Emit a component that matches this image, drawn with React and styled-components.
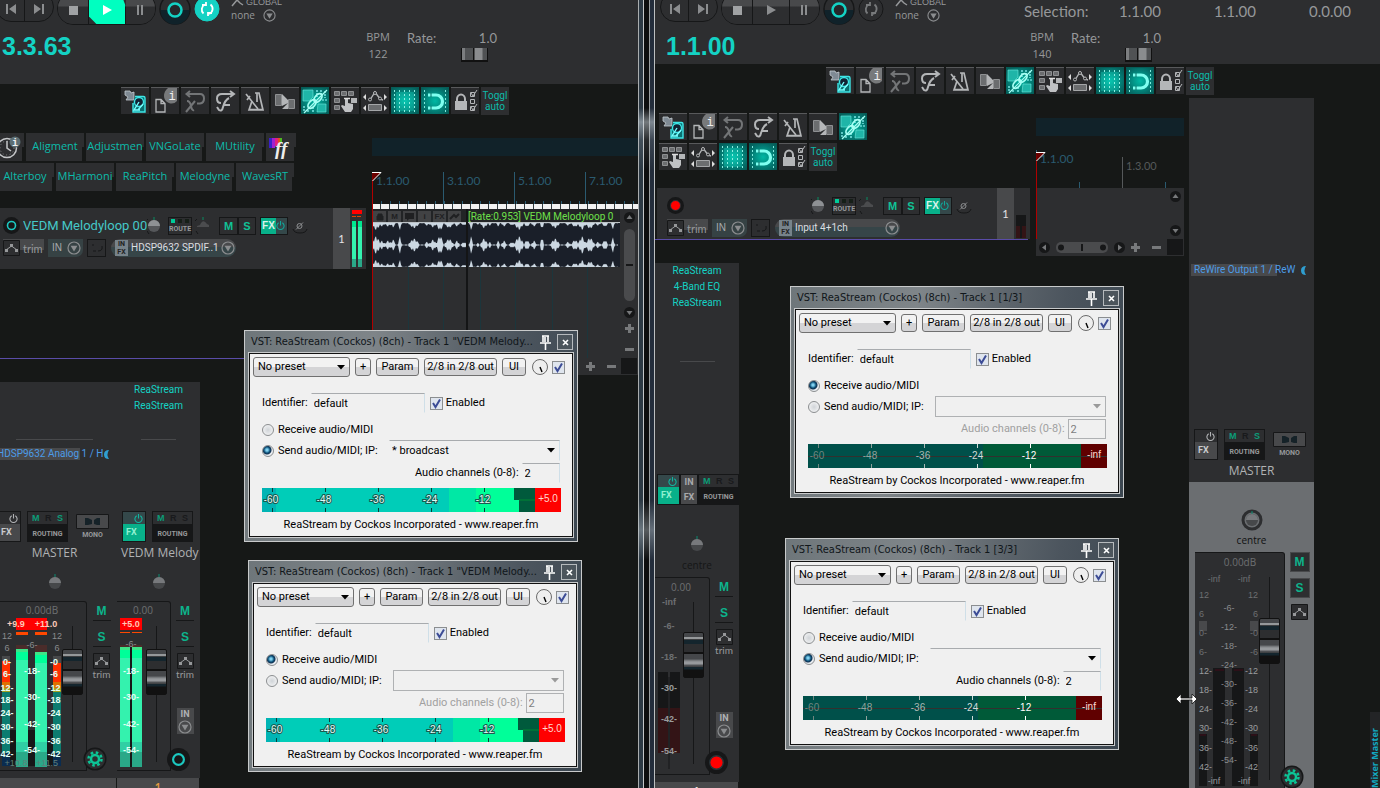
import React from 'react';
import styled, { createGlobalStyle, css } from 'styled-components';

const BG = '#161817';
const PANEL = '#2d2e30';
const RAISED = '#48494b';
const LINE = '#161718';
const TEAL = '#14d2c4';
const GREEN = '#0cb48c';
const DIM = '#6e7072';
const TEXT = '#96989a';

const ARIAL = '"Liberation Sans", Arial, sans-serif';
const UI = 'Lato, Calibri, sans-serif';
const SEGOE = '"Open Sans", "Segoe UI", sans-serif';
const DIALOG = 'Roboto, Tahoma, sans-serif';
const CAPTION = '"DejaVu Sans Condensed", "Segoe UI", sans-serif';

const GlobalStyle = createGlobalStyle`
  * {
    box-sizing: border-box;
  }
  body {
    margin: 0;
    background: ${BG};
    color: ${TEXT};
    font-family: ${UI};
    font-size: 12px;
    overflow: hidden;
  }
  button, input, select {
    font: inherit;
    color: inherit;
    margin: 0;
    padding: 0;
    border: 0;
    border-radius: 0;
    background: none;
    outline: none;
  }
  svg {
    display: block;
    flex: none;
  }
`;

/* ---------- page ---------- */

const Desktop = styled.div`
  position: relative;
  display: grid;
  grid-template-columns: 638fr 17px 725fr;
  height: 100vh;
  overflow: hidden;
`;

const Daw = styled.section`
  min-width: 0;
  display: flex;
  flex-direction: column;
  overflow: hidden;
`;

const Frames = styled.div`
  background:
    linear-gradient(transparent 108px, rgba(200, 210, 215, 0.55) 122px, rgba(200, 210, 215, 0.15) 140px, transparent 170px,
      transparent 500px, rgba(200, 210, 215, 0.4) 530px, transparent 560px),
    linear-gradient(90deg,
      #a9adaf 0 1px, #2c3944 1px 5px, #c3c6c8 5px 6px, #0d0e0f 6px 11px,
      #9a9ea0 11px 12px, #232d3b 12px 16px, #bcbfc0 16px 17px);
`;

/* ---------- transport ---------- */

const TransportBar = styled.header`
  display: flex;
  flex: none;
  height: ${p => p.$height}px;
  margin-left: ${p => p.$shift || 0}px;
  background: ${PANEL};
  font-family: ${UI};
`;

const TransportLeft = styled.div`
  flex: none;
  width: 369px;
`;

const TransportButtons = styled.div`
  display: flex;
  align-items: flex-start;
  height: 26px;
  padding-left: 5px;
`;

const Group = styled.div`
  display: flex;
  margin: -8px 3px 0 0;
  height: ${p => p.$h}px;
  border: 1px solid ${LINE};
  border-radius: 16px;
  overflow: hidden;
`;

const TransportButton = styled.button`
  display: flex;
  align-items: center;
  justify-content: center;
  width: ${p => p.$w}px;
  border-right: 1px solid ${LINE};
  padding-top: 3px;
  color: #8b8d8f;
  background: ${p => p.$raised ? 'linear-gradient(#48494b 13px, #2d2e30 14px)' : 'none'};
  &:last-child { border-right: 0; }
  ${p => p.$on && css`
    background: #00ffc0;
    color: #fff;
    clip-path: polygon(0 0, 86% 0, 100% 14px, 100% 100%, 20% 100%, 0 76%);
  `}
`;

const RoundButton = styled.button`
  width: 32px;
  height: 32px;
  margin-top: -7px;
`;

const Automation = styled.div`
  padding-left: 8px;
  width: 60px;
  font-size: 10px;
  line-height: 13px;
  color: ${TEXT};
  margin-top: -4px;
`;

const AutomationLine = styled.div`
  display: flex;
  align-items: center;
  gap: ${p => p.$gap}px;
  font-family: ${p => p.$caps ? ARIAL : SEGOE};
  font-size: ${p => p.$caps ? 9 : 10}px;
`;

const Clock = styled.output`
  display: block;
  margin: 5px 0 0 11px;
  font: bold 25px/30px ${ARIAL};
  color: ${TEAL};
`;

const TransportRight = styled.div`
  flex: 1;
  min-width: 0;
`;

const Selection = styled.div`
  display: flex;
  height: 28px;
  line-height: 22px;
  font-size: 15px;
  span { flex: none; width: 95px; white-space: nowrap; }
`;

const RateRow = styled.div`
  display: flex;
  line-height: 18px;
`;

const Tempo = styled.div`
  width: 36px;
  text-align: center;
  font-size: 11px;
  line-height: 17px;
  font-family: ${SEGOE};
`;

const Rate = styled.div`
  width: 90px;
  margin-left: 11px;
  font-size: 13px;
`;

const RateHead = styled.div`
  display: flex;
  justify-content: space-between;
  line-height: 20px;
`;

const RateSlider = styled.input`
  appearance: none;
  display: block;
  width: 27px;
  height: 14px;
  margin-left: 54px;
  &::-webkit-slider-thumb {
    appearance: none;
    width: 27px;
    height: 14px;
    border: solid #111;
    border-width: 0 1px 2px;
    background: linear-gradient(90deg, #7c7e80 0 3px, #505254 3px 11px, #111 11px 12px, #8a8c8e 13px 20px, #505254 21px);
  }
`;

const Skip = ({ flip }) => (
  <svg width="12" height="12" viewBox="0 0 12 12">
    <path d={flip ? 'M9 1h2v10H9zM1 1v10l7-5z' : 'M1 1h2v10H1zM11 1v10L4 6z'} fill="currentColor" />
  </svg>
);

const ArrowRing = ({ size = 13, color = '#8b8d8f' }) => (
  <svg width={size} height={size} viewBox="0 0 14 14">
    <circle cx="7" cy="7" r="6" fill="none" stroke={color} strokeWidth="1.200" />
    <path d="M3.600 4.800h6.800L7 10.600z" fill={color} />
  </svg>
);

const Transport = ({ height, shift, time, bpm, playing, selection }) => (
  <TransportBar $height={height} $shift={shift}>
    <TransportLeft>
      <TransportButtons>
        <Group $h={30}>
          <TransportButton $w={28} aria-label="Go to start"><Skip /></TransportButton>
          <TransportButton $w={28} aria-label="Go to end"><Skip flip /></TransportButton>
        </Group>
        <Group $h={33}>
          <TransportButton $w={31} $raised aria-label="Stop">
            <svg width="9" height="9"><path d="M0 0h9v9H0z" fill="#a0a2a4" /></svg>
          </TransportButton>
          <TransportButton $w={37} $raised $on={playing} aria-label="Play">
            <svg width="11" height="11"><path d="M1 0v10l9-5z" fill="currentColor" /></svg>
          </TransportButton>
          <TransportButton $w={29} $raised aria-label="Pause">
            <svg width="8" height="10"><path d="M0 0h2v10H0zM4 0h2v10H4z" fill="currentColor" /></svg>
          </TransportButton>
        </Group>
        <RoundButton aria-label="Record">
          <svg width="32" height="32">
            <circle cx="16" cy="16" r="15" fill="#2d2e30" stroke="#161718" strokeWidth="1.500" />
            <path d="M1.500 17h29a14.500 14.500 0 0 1-29 0z" fill="#10222a" />
            <circle cx="16" cy="17" r="6.500" fill="#25272a" stroke="#14d2c4" strokeWidth="2.500" />
          </svg>
        </RoundButton>
        <RoundButton aria-label="Repeat">
          <svg width="32" height="32">
            <circle cx="16" cy="16" r="12" fill={playing ? TEAL : 'none'} stroke={playing ? TEAL : '#161718'} />
            <g fill="none" stroke={playing ? '#fff' : '#77797b'} strokeWidth="1.800">
              <path d="M12.500 20.500A5.500 5.500 0 0 1 14 11.500M19.500 11.500A5.500 5.500 0 0 1 18 21" />
              <path d="M11 12h4v-3M21 20h-4v3" />
            </g>
          </svg>
        </RoundButton>
        <Automation>
          <AutomationLine $caps $gap={2}>
            <svg width="13" height="9"><path d="M1 8L6 2l3 3 3 2" fill="none" stroke="#96989a" strokeWidth="1.500" /></svg>
            GLOBAL
          </AutomationLine>
          <AutomationLine $gap={8}>none <ArrowRing /></AutomationLine>
        </Automation>
      </TransportButtons>
      <Clock>{time}</Clock>
    </TransportLeft>
    <TransportRight>
      <Selection>
        {selection && <><span>Selection:</span>{selection.map((s, i) => <span key={i}>{s}</span>)}</>}
      </Selection>
      <RateRow>
        <Tempo>BPM<br />{bpm}</Tempo>
        <Rate>
          <RateHead><label htmlFor={`rate${bpm}`}>Rate:</label><span>1.0</span></RateHead>
          <RateSlider id={`rate${bpm}`} type="range" defaultValue="50" />
        </Rate>
      </RateRow>
    </TransportRight>
  </TransportBar>
);

/* ---------- toolbars ---------- */

const ToolRow = styled.div`
  display: flex;
  flex: none;
  gap: 2px;
  height: 28px;
  margin-bottom: 2px;
  padding-left: ${p => p.$indent || 0}px;
`;

const Tool = styled.button`
  flex: none;
  width: 28px;
  height: 27px;
  background: ${p => p.$on ? 'radial-gradient(#00b8a4, #04706a 70%, #045853)' : '#2a2b2d'};
  border-top: 1px solid ${p => p.$on ? '#075c57' : '#58595b'};
`;

const TextTool = styled.button`
  flex: none;
  width: 28px;
  height: 28px;
  background: ${PANEL};
  color: #0cbcab;
  font: 10px/11px ${DIALOG};
`;

const icons = {
  project: (
    <>
      <path d="M4 3h5l1 2 3-1v8H5l2-3-3-2z" fill="#7f8a94" stroke="#c4cbd0" strokeWidth=".8" />
      <path d="M14 8.500h8.500q1.500 0 1.500 1.500v14H12v-9" fill="#0b6f70" stroke="#3ee6e6" strokeWidth="1.400" />
      <circle cx="18" cy="14" r="4.500" fill="#123" stroke="#3ee6e6" strokeWidth="1.300" />
      <path d="M18 14l-5 8h4l5-6M14 22h5" fill="none" stroke="#7ff" strokeWidth="1.400" />
    </>
  ),
  info: (
    <>
      <path d="M5 11.500h5l4 4V24H5zM10 11.500v4h4" fill="none" stroke="#b4b6b8" strokeWidth="1.300" />
      <path d="M26 0v13a7.500 7.500 0 0 1-13-5q0-5 4-8z" fill="#77797b" />
      <text x="17.500" y="11.500" fontSize="12" fontFamily="Liberation Mono" fill="#eee" textAnchor="start">i</text>
    </>
  ),
  undo: (
    <g fill="none" stroke="#737577" strokeWidth="2">
      <path d="M6 6h13q4 0 4 4.500T19 15.500h-3M9 3L5.500 6 9 9" />
      <path d="M6 13q3 0 4 5t3 4M14 13L5 24" />
    </g>
  ),
  redo: (
    <g fill="none" stroke="#b4b6b8" strokeWidth="2">
      <path d="M22 6H11q-5 0-5 4.500T10 15M19 3l4 3-4 3" />
      <path d="M18 10q-4 2-6 9-1 5-4 3l-2-3M13 17h6" />
    </g>
  ),
  metronome: (
    <g fill="none" stroke="#b4b6b8" strokeWidth="1.700">
      <path d="M14 5h4l4 17H8l3-9M8 21.500h14" />
      <path d="M5 6l12 15M9 8l-3 4M16 5v9" />
    </g>
  ),
  crossfade: (
    <>
      <path d="M4.500 6.500h6v11h-6zM17.500 11.500h6v9h-6z" fill="#6b6d6f" stroke="#8e9092" />
      <path d="M11 6l6 6v3l-6 3zM11 21l6-6v6z" fill="#b4b6b8" />
    </>
  ),
  ripple: (
    <>
      <path d="M2 2h10v7l-4 4H2zM17 16h8v8h-9z" fill="#1fb5a8" stroke="#6fe8dc" strokeWidth=".6" />
      <path d="M16 2v7M20 2v4M24 3v7M3 18v6M7 22v3M12 19v6M26 12h-5" stroke="#9ff" strokeWidth="1.200" strokeDasharray="2 1" />
      <g fill="none" stroke="#a6fff4">
        <ellipse cx="17" cy="10" rx="5" ry="3" transform="rotate(-48 17 10)" strokeWidth="1.800" />
        <ellipse cx="11" cy="16" rx="5" ry="3" transform="rotate(-48 11 16)" strokeWidth="1.800" />
        <path d="M3 25L26 2" strokeWidth="1.200" />
      </g>
    </>
  ),
  grouping: (
    <>
      <path d="M3.500 3.500h5v4h-5zM10.500 3.500h5v4h-5zM17.500 3.500h5v4h-5zM3.500 10.500h5v4h-5zM3.500 17.500h5v4h-5z" fill="#6b6d6f" stroke="#8e9092" />
      <path d="M20 10h6v5h-6z" fill="#b4b6b8" />
      <path d="M14 24l-4-6 1-1 3 1v-7q1.500-2 3 0v4l5 1v5l-2 3z" fill="#c0c2c4" />
      <path d="M13 10.500h6" stroke="#ddd" strokeWidth="1.500" />
    </>
  ),
  envelope: (
    <>
      <path d="M9 12l5-8 5 7 3 1" fill="none" stroke="#b4b6b8" strokeWidth="1.400" />
      <path d="M5 6v6L2 9zM23 6v6l3-3zM5 17v6l-3-3zM23 17v6l3-3z" fill="#ddd" />
      <g fill="#2a2b2d" stroke="#b4b6b8"><circle cx="9" cy="11.500" r="1.500" /><circle cx="14" cy="5" r="1.500" /><circle cx="19" cy="10.500" r="1.500" /></g>
      <path d="M7.500 16.500h13v6h-13z" fill="#6b6d6f" stroke="#a4a6a8" />
    </>
  ),
  grid: (
    <>
      <rect x="5" y="4" width="18" height="19" fill="#1ff0d8" opacity=".25" />
      <path d="M3.500 2v23M8.500 2v23M13.500 2v23M18.500 2v23M23.500 2v23" stroke="#8cefe2" strokeDasharray="2 2" />
    </>
  ),
  snap: (
    <>
      <path d="M3.500 2v23M24.500 2v23" stroke="#7fe8dc" strokeDasharray="2 2" />
      <path d="M7 7h8a6.500 6.500 0 0 1 0 13H7" fill="none" stroke="#7ffff0" strokeWidth="3.200" />
      <path d="M10 5v4M10 18v4" stroke="#056b64" />
    </>
  ),
  lock: (
    <>
      <path d="M6 14v-3a4 4.500 0 0 1 8 0v3" fill="none" stroke="#b4b6b8" strokeWidth="2" />
      <path d="M4 13h12v9H4z" fill="#b4b6b8" />
      <g fill="none" stroke="#b4b6b8"><path d="M19.500 4.500h4v4h-4zM19.500 11.500h4v4h-4zM19.500 18.500h4v4h-4zM20 5l2 3 4-6M20 19l2 3 4-6" /></g>
    </>
  ),
};

const teal = ['ripple', 'grid', 'snap'];

const ToolButton = ({ name }) => (
  <Tool $on={teal.includes(name)} aria-label={name}>
    <svg width="28" height="26" viewBox="0 0 28 26">{icons[name]}</svg>
  </Tool>
);

const Toggle = () => <TextTool>Toggl<br />auto</TextTool>;

const FIRST = ['project', 'info', 'undo', 'redo', 'metronome', 'crossfade', 'ripple'];
const SECOND = ['grouping', 'envelope', 'grid', 'snap', 'lock'];

const MainToolbar = styled.div`
  padding-top: 3px;
  height: ${p => p.$h}px;
  flex: none;
`;

const Shelf = styled.div`
  display: flex;
  gap: 2px;
  margin: 0 0 2px ${p => p.$shift}px;
`;

const PluginButton = styled.button`
  flex: none;
  width: ${p => p.$w || 58}px;
  height: 28px;
  padding-bottom: 2px;
  overflow: hidden;
  white-space: nowrap;
  background: linear-gradient(${PANEL}, ${PANEL}) 0 0 / calc(100% - 2px) 100% no-repeat, linear-gradient(${PANEL}, ${PANEL}) 0 0 / 100% 50% no-repeat;
  color: #0cbcab;
  font: 11px/20px ${SEGOE};
`;

/* ---------- track control panel ---------- */

const TrackRow = styled.div`
  display: flex;
  height: ${p => p.$h}px;
  margin: 0 6px 0 ${p => p.$inset || 0}px;
  background: ${PANEL};
`;

const TrackControls = styled.div`
  flex: none;
  width: ${p => p.$w}px;
  padding-left: ${p => p.$pad}px;
`;

const ControlLine = styled.div`
  display: flex;
  align-items: center;
  height: ${p => p.$h}px;
  padding-top: ${p => p.$pt || 0}px;
`;

const TrackName = styled.input`
  width: 124px;
  margin-left: 3px;
  height: 20px;
  font: 13px/20px ${DIALOG};
  color: #45c8c8;
`;

const Boxed = styled.button`
  display: flex;
  align-items: center;
  justify-content: center;
  flex: none;
  width: ${p => p.$w}px;
  height: 18px;
  margin-left: ${p => p.$ml || 0}px;
  border: 1px solid ${LINE};
  background: #2d2e30;
  color: #10c296;
  font: bold 11px/14px ${ARIAL};
`;

const RouteButton = styled(Boxed)`
  flex-direction: column;
  font: bold 7px/8px Roboto, sans-serif;
  color: ${TEXT};
`;

const FxPower = styled.span`
  display: flex;
  border: 1px solid ${LINE};
  margin-left: 4px;
  button { width: 15px; height: 16px; background: #08b18a; color: #d8f4ec; font: bold 10px/16px ${ARIAL}; }
  button + button { width: 11px; background: #34484a; }
`;

const EnvTag = styled.button`
  display: flex;
  align-items: center;
  gap: 3px;
  width: 41px;
  height: 18px;
  background: linear-gradient(#48494b 11px, transparent 11px);
  color: ${TEXT};
  font-size: 11px;
`;

const InputTag = styled.button`
  display: flex;
  align-items: center;
  gap: 5px;
  width: 35px;
  height: 18px;
  margin-left: 4px;
  padding-left: 4px;
  border-radius: 0 0 7px 0;
  background: #364244;
  color: #a8aaac;
  font: 10px/18px ${ARIAL};
`;

const InputPill = styled.label`
  display: flex;
  align-items: center;
  width: 125px;
  height: 18px;
  margin-left: 5px;
  padding: 0 1px 0 4px;
  border-radius: 9px;
  background: linear-gradient(#48494b 8px, #364548 8px);
  color: #dcdee0;
`;

const PillSelect = styled.select`
  appearance: none;
  flex: 1;
  min-width: 0;
  margin-left: 3px;
  font: 10px/16px ${DIALOG};
`;

const FxIn = styled.span`
  width: 13px;
  height: 16px;
  background: #77838a;
  color: #222;
  text-align: center;
  font: bold 7px/8px Roboto, sans-serif;
`;

const TrackNumber = styled.div`
  display: flex;
  align-items: center;
  justify-content: center;
  width: 17px;
  background: ${RAISED};
  color: #e6e6e6;
  font-size: 11px;
`;

const Power = ({ color = TEAL, size = 9 }) => (
  <svg width={size} height={size} viewBox="0 0 10 10">
    <path d="M3 2a4 4 0 1 0 4 0M5 0v5" fill="none" stroke={color} strokeWidth="1.200" />
  </svg>
);

const EnvIcon = () => (
  <svg width="17" height="16">
    <path d="M.5.5h16v15H.5z" fill="#2d2e30" stroke="#161718" />
    <path d="M3 10l5.500-4L14 10" fill="none" stroke="#96989a" />
    <path d="M2 9h3v3H2zM7 4h3v3H7zM12 9h3v3h-3z" fill="#96989a" />
  </svg>
);

const Knob = ({ small }) => (
  <svg width={small ? 22 : 16} height="18" viewBox={small ? '0 0 22 18' : '4 0 16 18'}>
    <path d="M3 4L5 2M4 14l2 3" stroke="#161718" />
    <path d="M11 0v3" stroke="#0a8a60" />
    {small
      ? <path d="M5 9l3-1q3-7 7-1l2 1v2H5z" fill="#4b4c4e" />
      : <><circle cx="11" cy="9" r="6" fill="#55575a" /><path d="M5 9a6 6 0 0 1 12 0z" fill="#8e9194" /></>}
  </svg>
);

const RecordDot = ({ armed, size = 17 }) => (
  <svg width={size} height={size} viewBox="0 0 17 17">
    <circle cx="8.500" cy="8.500" r="8.500" fill="#161718" />
    {armed
      ? <circle cx="8.500" cy="8.500" r="5" fill="#ff0000" stroke="#25353a" />
      : <circle cx="8.500" cy="8.500" r="4" fill="none" stroke="#1cc8c0" strokeWidth="1.600" />}
  </svg>
);

const TrackPanel = ({ height, inset, pad, controls, name, input, armed, children }) => (
  <TrackRow $h={height} $inset={inset}>
    <TrackControls $w={controls} $pad={pad}>
      <ControlLine $h={28} $pt={7}>
        <button aria-label="Arm track"><RecordDot armed={armed} /></button>
        <TrackName aria-label="Track name" defaultValue={name} />
        <Knob />
        <RouteButton $w={24} $ml={5}>
          <svg width="20" height="7"><path d="M1 1h4v4H1z" fill="#0c9" /><path d="M8 1h4v4H8zM15 1h4v4h-4z" fill="#161f18" /></svg>
          ROUTE
        </RouteButton>
        <Knob small />
        <Boxed $w={19} $ml={5}>M</Boxed>
        <Boxed $w={18}>S</Boxed>
        <FxPower><button>FX</button><button aria-label="FX bypass"><Power color="#11a59a" /></button></FxPower>
        <svg width="24" height="18">
          <path d="M5 12q1 4 7 4t7-4" fill="none" stroke="#161718" />
          <circle cx="11.500" cy="9" r="2.500" fill="none" stroke="#8b8d8f" /><path d="M8 12.500l7-7" stroke="#8b8d8f" />
        </svg>
      </ControlLine>
      <ControlLine $h={24}>
        <EnvTag><EnvIcon />trim</EnvTag>
        <InputTag>IN <ArrowRing size={14} /></InputTag>
        <Boxed $w={19} $ml={4} aria-label="Record mode">
          <svg width="13" height="12"><path d="M3 2v2M3 9h3M8 9q5 0 4-5" fill="none" stroke="#161718" /></svg>
        </Boxed>
        <InputPill>
          <FxIn>IN<br />FX</FxIn>
          <PillSelect aria-label="Track input"><option>{input}</option></PillSelect>
          <ArrowRing size={14} />
        </InputPill>
      </ControlLine>
    </TrackControls>
    <TrackNumber>1</TrackNumber>
    {children}
  </TrackRow>
);

/* ---------- timeline ---------- */

const Timeline = styled.div`
  flex: 1;
  min-width: 0;
  position: relative;
`;

const Overview = styled.div`
  height: 18px;
  margin-top: ${p => p.$mt}px;
  background: #112229;
`;

const Ruler = styled.div`
  display: flex;
  height: ${p => p.$h}px;
  margin-top: ${p => p.$mt}px;
  overflow: hidden;
  background: repeating-linear-gradient(90deg, #2a5a70 0 1px, transparent 1px ${p => p.$step}px) 0 100% / 100% ${p => p.$tick}px no-repeat;
`;

const Mark = styled.div`
  flex: none;
  width: ${p => p.$w}px;
  height: 100%;
  padding-left: 3px;
  margin-top: ${p => p.$mt || 0}px;
  border-left: 1px solid ${p => p.$c || '#2a5a70'};
  color: ${p => p.$c || '#2a5a70'};
  font-size: ${p => p.$fs || 12}px;
  line-height: 17px;
`;

const Beats = styled.div`
  height: 5px;
  background: repeating-linear-gradient(90deg, #f2f2f2 0 8px, #303a3e 8px 9px);
`;

const Arrange = styled.div`
  display: flex;
  height: ${p => p.$h}px;
  background: ${PANEL};
`;

const Lane = styled.div`
  position: relative;
  flex: 1;
  min-width: 0;
  overflow: hidden;
`;

const GridLines = styled.div`
  height: 100%;
  background: repeating-linear-gradient(90deg, transparent 0 36px, #1c363c 36px 37px, transparent 37px 71px, #1c363c 71px 72px);
`;

const Item = styled.div`
  width: 248px;
  height: 58px;
  background: #1a1f29;
  overflow: hidden;
`;

const ItemHead = styled.div`
  display: flex;
  gap: 2px;
  height: 14px;
  padding: 2px 0 0 1px;
  background: #222426;
  border-bottom: 1px solid #bcc2c6;
  white-space: nowrap;
  color: #6fe04a;
  font: 10px/11px ${DIALOG};
`;

const ItemName = styled.span`
  padding-left: 5px;
`;

const ItemChip = styled.span`
  flex: none;
  width: 13px;
  height: 11px;
  background: #414244;
  color: #1f2022;
  text-align: center;
  font: bold 8px/11px ${ARIAL};
`;

const EditCursor = styled.div`
  position: absolute;
  left: 0;
  top: ${p => p.$top}px;
  bottom: 17px;
  width: 1px;
  background: #b00000;
`;

const PlayCursor = styled.div`
  position: absolute;
  left: 94px;
  top: 0;
  bottom: 0;
  width: 2px;
  background: #141516;
`;

const ScrollColumn = styled.div`
  display: flex;
  flex-direction: column;
  align-items: center;
  justify-content: ${p => p.$spread ? 'space-between' : 'flex-start'};
  gap: 6px;
  width: 17px;
  padding: 3px 0;
`;

const ZoomSigns = styled.div`
  display: flex;
  flex-direction: ${p => p.$down ? 'column' : 'row'};
  gap: 12px;
`;

const ScrollThumb = styled.div`
  display: flex;
  align-items: center;
  justify-content: center;
  width: 11px;
  height: 72px;
  border-radius: 6px;
  background: #4a4b4d;
  &::after {
    content: '';
    width: 7px;
    height: 2px;
    background: #161718;
  }
`;

const ScrollRow = styled.div`
  display: flex;
  align-items: center;
  justify-content: flex-end;
  gap: ${p => p.$gap}px;
  height: 17px;
  background: ${PANEL};
`;

const Corner = styled.div`
  width: 17px;
  height: 17px;
  background: #161718;
  border: solid ${PANEL};
  border-width: 0 1px 1px 0;
`;

const ScrollArrow = ({ d }) => (
  <svg width="11" height="11"><circle cx="5.500" cy="5.500" r="5.500" fill="#161718" /><path d={d} fill="#77797b" /></svg>
);

const Sign = ({ plus }) => (
  <svg width="9" height="9"><path d={plus ? 'M3 0h3v3h3v3H6v3H3V6H0V3h3z' : 'M0 3h9v3H0z'} fill="#77797b" /></svg>
);

const CursorFlag = () => (
  <svg width="10" height="10"><path d="M0 .5h9L.5 9z" fill="#6a0000" /><path d="M0 .5h9L.5 9" fill="none" stroke="#fff" /></svg>
);

const hits = [[4, 8, 5], [10, 4, 3], [16, 4, 4], [21, 5, 3], [28, 8, 2], [42, 6, 6], [55, 3, 3], [61, 5, 4], [68, 9, 4], [77, 6, 5], [85, 4, 3], [92, 3, 3], [99, 8, 2], [106, 2, 2], [112, 6, 4], [118, 3, 2], [126, 4, 2], [132, 4, 3], [140, 3, 3], [147, 8, 5], [155, 5, 3], [162, 4, 3], [170, 8, 2], [183, 6, 5], [196, 3, 3], [203, 5, 4], [210, 8, 4], [218, 7, 5], [226, 3, 3], [233, 5, 3], [241, 7, 2]];

const level = x => {
  let v = x % 4 ? 0.4 : 0;
  hits.forEach(([c, h, w]) => {
    const k = 1 - Math.abs(x - c) / w;
    if (k > 0) v = Math.max(v, h * k ** 0.7 * (x % 3 === 2 ? 0.6 : 1.1));
  });
  return v;
};

const lane = (y, up, down) => {
  const xs = Array.from({ length: 247 }, (_, i) => i);
  const top = xs.map(x => `${x} ${y - level(x) * up}`);
  const bottom = xs.map(x => `${x} ${y + level(x) * down}`).reverse();
  return `M${top.concat(bottom).join('L')}z`;
};

const Waveform = () => (
  <svg width="247" height="44">
    <path d={lane(0, 0, 0.8) + lane(22, 1, 1) + lane(44, 0.8, 0)} fill="#ccd8e2" />
  </svg>
);

/* ---------- mixer ---------- */

const Mixer = styled.div`
  display: flex;
  flex: none;
  width: ${p => p.$w}px;
  height: ${p => p.$h}px;
  background: ${PANEL};
  overflow: hidden;
`;

const Strip = styled.div`
  display: flex;
  flex-direction: column;
  flex: none;
  width: ${p => p.$w}px;
  margin-left: ${p => p.$shift || 0}px;
  > * { flex-shrink: 0; }
`;

const Slots = styled.div`
  height: ${p => p.$h}px;
  text-align: center;
  font: 10px/16px ${DIALOG};
  color: ${TEAL};
`;

const SlotRule = styled.hr`
  width: ${p => p.$w}px;
  margin: 0 auto;
  border: 0;
  border-top: 1px solid ${RAISED};
`;

const Sends = styled.div`
  height: ${p => p.$h}px;
  padding: 8px 0 0 2px;
`;

const Send = styled.div`
  display: flex;
  align-items: center;
  height: 12px;
  color: #4c9ce8;
  font: 10px/12px ${DIALOG};
  background: linear-gradient(${RAISED}, ${RAISED}) 0 0 / 86px 100% no-repeat;
  padding-left: 3px;
  white-space: nowrap;
  svg { margin: 0 8px 0 auto; }
`;

const StripHead = styled.div`
  display: flex;
  height: 31px;
  padding-left: ${p => p.$pad}px;
`;

const FxBlock = styled.button`
  display: flex;
  flex-direction: column;
  flex: none;
  width: ${p => p.$w || 24}px;
  height: 31px;
  border: 1px solid ${LINE};
  background: linear-gradient(${p => p.$on ? '#34484a 12px, #08b18a 12px' : '#2d2e30 12px, #48494b 12px'});
  color: ${p => p.$on ? '#8ff0d0' : '#c8cacc'};
  font: bold 9px/18px ${DIALOG};
  text-align: left;
  padding-left: 3px;
  svg { margin: 2px 2px 0 auto; }
`;

const InFx = styled.button`
  width: 18px;
  height: 31px;
  border: 1px solid ${LINE};
  background: ${RAISED};
  color: #a8aaac;
  font: bold 9px/15px ${DIALOG};
`;

const Routing = styled.button`
  flex: none;
  width: 41px;
  height: 31px;
  margin-left: ${p => p.$ml}px;
  border: 1px solid ${LINE};
  background: linear-gradient(#2d2e30 12px, #161718 12px);
  color: ${TEXT};
  font: bold 7px/18px ${DIALOG};
`;

const RoutingFlags = styled.span`
  display: flex;
  justify-content: space-between;
  padding: 0 4px;
  height: 13px;
  font: bold 9px/13px ${ARIAL};
  color: #0c9c78;
  i { font-style: normal; color: #191a1c; }
`;

const Mono = styled.button`
  width: 33px;
  margin: 2px 0 0 8px;
  color: ${TEXT};
  font: bold 7px/12px ${DIALOG};
`;

const StripName = styled.div`
  height: 22px;
  padding-left: ${p => p.$pad || 0}px;
  text-align: ${p => p.$pad ? 'left' : 'center'};
  white-space: nowrap;
  overflow: hidden;
  color: #b0b2b4;
  font: 12px/22px ${SEGOE};
`;

const Pan = styled.div`
  display: flex;
  flex-direction: column;
  align-items: center;
  height: ${p => p.$h}px;
  padding-top: ${p => p.$pt}px;
  color: ${p => p.$c};
  font: 10px/18px ${SEGOE};
`;

const FaderRow = styled.div`
  position: relative;
  display: flex;
  height: ${p => p.$h}px;
  padding-left: ${p => p.$pad || 0}px;
`;

const FaderBox = styled.div`
  display: flex;
  flex: none;
  width: ${p => p.$w}px;
  height: 100%;
  background: ${PANEL};
  border: solid ${LINE};
  border-width: 1px 1px 1px 0;
  border-radius: 0 3px 0 0;
`;

const Fader = styled.input`
  appearance: none;
  writing-mode: vertical-lr;
  direction: rtl;
  flex: none;
  width: 21px;
  height: ${p => p.$h}px;
  margin-top: ${p => p.$mt}px;
  background: linear-gradient(#161718, #161718) 50% 0 / 1px 100% no-repeat;
  &::-webkit-slider-thumb {
    appearance: none;
    width: 21px;
    height: 46px;
    border: 1px solid #111;
    border-radius: 2px;
    background: linear-gradient(#45474a 0 4px, #95989a 4px 6px, #3c3e40 6px 7px, #14252d 7px 11px, #2d2e30 11px 19px,
      #111 19px 21px, #45474a 21px 26px, #6a6d70 27px, #96999c 29px 31px, #55575a 32px, #3a3c3e 34px, #14252d 34px 36px, #111 37px);
  }
`;

const Side = styled.div`
  display: flex;
  flex-direction: column;
  align-items: center;
  width: ${p => p.$w || 28}px;
  color: ${TEXT};
  font: 10px/11px ${UI};
`;

const SideButton = styled.button`
  width: ${p => p.$boxed ? 20 : 18}px;
  height: 20px;
  margin-bottom: 6px;
  color: ${GREEN};
  font: bold 12px/18px ${ARIAL};
  ${p => p.$boxed ? css`
    background: ${PANEL};
    border: 1px solid #48494b;
  ` : css`
    border-bottom: 1px solid ${LINE};
  `}
`;

const InBadge = styled.button`
  width: 17px;
  height: 26px;
  margin-top: ${p => p.$mt}px;
  background: ${RAISED};
  color: #b0b2b4;
  font: bold 9px/11px ${DIALOG};
  svg { margin: 0 auto; }
`;

const CornerButton = styled.button`
  position: absolute;
  left: ${p => p.$left}px;
  top: ${p => p.$top}px;
`;

const StripFoot = styled.div`
  flex: 1;
  margin-top: 7px;
  border-right: 1px solid ${BG};
  background: ${RAISED};
  color: ${p => p.$c || '#e6e6e6'};
  text-align: center;
  font: bold 11px/17px ${UI};
`;

const PanKnob = ({ ring }) => (
  <svg width="22" height="22">
    {ring && <circle cx="11" cy="11" r="9" fill="#6b6e71" stroke="#2d2e30" strokeWidth="3" />}
    <circle cx="11" cy="11" r="6" fill="#46484a" />
    <path d="M5 11a6 6 0 0 1 12 0z" fill="#77797c" />
    <path d="M11 2v3" stroke="#0a8a70" />
  </svg>
);

const Gear = () => (
  <svg width="24" height="24">
    <circle cx="12" cy="12" r="11.500" fill="#161718" />
    <circle cx="12" cy="12" r="10" fill="#2d2e30" />
    <circle cx="12" cy="12" r="6.500" fill="none" stroke="#0cc496" strokeWidth="2.500" strokeDasharray="2.550 2.550" />
    <circle cx="12" cy="12" r="4" fill="none" stroke="#0cc496" strokeWidth="2.500" />
  </svg>
);

const Moon = () => <svg width="5" height="9"><path d="M5 0Q0 0 0 4.500T5 9Q2 4.500 5 0z" fill="#2f9ed0" /></svg>;

const SCALE = { fontFamily: 'Liberation Sans', fontSize: 9, textAnchor: 'middle' };

const Labels = ({ list, x, fill, weight }) => (
  <g fill={fill} fontWeight={weight}>
    {list.map(([t, y]) => <text key={t + y} x={x} y={y + 3}>{t}</text>)}
  </g>
);

const LitBar = ({ x, w, y }) => (
  <>
    <rect x={x} y={y} width={w} height={165 - y} fill="#34f2ae" />
    <rect x={x} y={y} width={w} height="3" fill="#3fe488" />
    <rect x={x} y={y + 3} width={w} height="8" fill="#00ff99" />
    <rect x={x} y="140" width={w} height="14" fill="#30cfa4" />
    <rect x={x} y="150" width={w} height="15" fill="#2aa888" />
  </>
);

const SideBar = ({ x, y }) => (
  <>
    <rect x={x} y="54" width="8" height="8" fill="#48494b" />
    <rect x={x} y={y} width="8" height={86 - y} fill="#ff3000" />
    <rect x={x} y="80" width="8" height="6" fill="#e07000" />
    <rect x={x} y="86" width="8" height="4" fill="#a0a020" />
    <rect x={x} y="90" width="8" height="61" fill="#0c7c70" />
    <rect x={x} y="151" width="8" height="13" fill="#0a2c50" />
  </>
);

const LIT_CENTER = [['-18-', 69], ['-30-', 95], ['-42-', 122], ['-54-', 148]];

const MasterLit = () => (
  <svg width="70" height="168" {...SCALE}>
    <text x="50" y="12" fill={DIM} fontFamily="Open Sans" fontSize="10">0.00dB</text>
    <rect x="24" y="16" width="31" height="12" fill="#ff0000" />
    <g fill="#ffc8b8" fontWeight="bold"><text x="24" y="25">+9.9</text><text x="54" y="25">+11.0</text></g>
    <path d="M24 31.500h12M43 31.500h12" stroke="#ff4800" strokeWidth="3" />
    <path d="M24 43h12v4H24zM43 43h12v7H43z" fill="#4a2c2a" />
    <path d="M18 128h6v36h-6zM36 128h7v36h-7zM55 128h6v36h-6z" fill="#161718" />
    <SideBar x={10} y={59} />
    <SideBar x={61} y={61} />
    <LitBar x={24} w={12} y={47} />
    <LitBar x={43} w={12} y={50} />
    <Labels x={15} fill="#8a8c8e" list={[['12', 34], ['6', 46]]} />
    <Labels x={65} fill="#8a8c8e" list={[['12', 34], ['6', 46]]} />
    <Labels x={40} fill="#8a8c8e" list={[['-6-', 43]]} />
    <Labels x={15} fill="#e4fff4" weight="bold" list={[['0-', 60], ['6-', 72], ['12-', 86], ['18-', 98], ['24-', 111], ['30-', 125], ['36-', 139], ['42-', 152]]} />
    <Labels x={62} fill="#e4fff4" weight="bold" list={[['-0', 60], ['-6', 72], ['-12', 86], ['-18', 98], ['-24', 111], ['-30', 125], ['-36', 139], ['-42', 152]]} />
    <Labels x={40} fill="#e4fff4" weight="bold" list={LIT_CENTER} />
    <g fill="#5f7f78"><text x="24" y="164">+10.8</text><text x="55" y="164">+11.5</text></g>
  </svg>
);

const MasterIdle = () => {
  const ys = [[12, 41], [6, 60], [0, 79], [6, 98], [12, 117], [18, 136], [24, 155], [30, 174], [36, 194], [42, 213]];
  return (
    <svg width="64" height="236" {...SCALE}>
      <text x="45" y="13" fill={DIM} fontFamily="Open Sans" fontSize="10">0.00dB</text>
      <path d="M4 68h8v10H4zM55 68h8v10h-8z" fill="#48494b" />
      <path d="M18 115h12v118H18zM37 115h12v118H37zM4 181h8v52H4zM55 181h8v52h-8z" fill="#161718" />
      <path d="M20 117h9M39 117h9M5 182h6M56 182h6" stroke="#2c1018" strokeWidth="2" />
      <g fill={DIM}><text x="19" y="29">-inf</text><text x="49" y="29">-inf</text></g>
      {ys.map(([n, y]) => (
        <g key={y} fill={y > 110 ? '#9a9c9e' : DIM}>
          <text x="4" y={y + 4} textAnchor="start">{n}{y > 70 && '-'}</text>
          <text x="63" y={y + 4} textAnchor="end">{y > 70 && '-'}{n}</text>
        </g>
      ))}
      <Labels x={34} fill="#8a8c8e" list={[6, 12, 18, 24, 30, 36, 42, 48, 54].map((n, i) => [`-${n}-`, 55 + i * 19])} />
      <g fill={TEXT}><text x="19" y="231">-inf</text><text x="49" y="231">-inf</text></g>
    </svg>
  );
};

const TrackLit = () => (
  <svg width="29" height="168" {...SCALE} overflow="visible">
    <text x="26" y="12" fill={DIM} fontFamily="Open Sans" fontSize="10">0.00</text>
    <rect x="3" y="16" width="22" height="12" fill="#ff0000" />
    <text x="14" y="25" fill="#ffc8b8" fontWeight="bold">+5.0</text>
    <path d="M3 30.500h10M15 30.500h10" stroke="#ff4800" />
    <path d="M3 43h22v2H3z" fill="#4a2c2a" />
    <path d="M3 45h22v120H3z" fill="#161718" />
    <LitBar x={3} w={10} y={45} />
    <LitBar x={15} w={10} y={45} />
    <Labels x={14} fill="#8a8c8e" list={[['-6-', 42]]} />
    <Labels x={14} fill="#e4fff4" weight="bold" list={LIT_CENTER} />
  </svg>
);

const TrackIdle = () => (
  <svg width="28" height="196" {...SCALE} overflow="visible">
    <text x="26" y="13" fill={DIM} fontFamily="Open Sans" fontSize="10">0.00</text>
    <path d="M3 94h10v81H3zM15 94h10v81H15z" fill="#161718" />
    <path d="M3 130h10v45H3zM15 130h10v45H15z" fill="#331416" />
    <path d="M14 99v92" stroke="#161718" />
    <Labels x={14} fill={DIM} weight="bold" list={[['-inf', 24], ['-6-', 48], ['-18-', 79]]} />
    <Labels x={14} fill="#9a9c9e" weight="bold" list={[['-30-', 110], ['-42-', 141], ['-54-', 173]]} />
  </svg>
);

const MonoButton = () => (
  <Mono>
    <svg width="33" height="15">
      <path d="M.5.5h32v14H.5z" fill="#48494b" stroke="#161718" />
      <path d="M9 4h3l4 2v4l-4 1H9zM24 4h-3l-3 2v4l3 1h3z" fill="#152228" />
    </svg>
    MONO
  </Mono>
);

const RoutingButton = ({ ml, stereo }) => (
  <Routing $ml={ml}>
    <RoutingFlags>M <i>R</i> {stereo ? <b>S</b> : <i>S</i>}</RoutingFlags>
    ROUTING
  </Routing>
);

const MasterHead = ({ send, space }) => (
  <>
    <Sends $h={space}><Send>{send}<Moon /></Send></Sends>
    <StripHead $pad={5}>
      <FxBlock><Power color="#b0b2b4" />FX</FxBlock>
      <RoutingButton ml={6} stereo />
      <MonoButton />
    </StripHead>
    <StripName>MASTER</StripName>
  </>
);

/* ---------- plug-in windows ---------- */

const check = encodeURIComponent('<svg xmlns="http://www.w3.org/2000/svg" width="13" height="13"><path d="M3 6l2.500 4L10 2.500" fill="none" stroke="#3c4c96" stroke-width="2"/></svg>');
const arrow = c => encodeURIComponent(`<svg xmlns="http://www.w3.org/2000/svg" width="8" height="5"><path d="M0 0h8L4 4.500z" fill="${c}"/></svg>`);

const Plugin = styled.section`
  position: absolute;
  left: ${p => p.$x}px;
  top: ${p => p.$y}px;
  width: 334px;
  padding: 0 4px 4px;
  border: 1px solid #c8cacb;
  background: linear-gradient(100deg, #6e767a, #7f8589 35%, #5c646b 60%, #4c555e 75%, #3b4650);
  color: #000;
  font: 11px/14px ${DIALOG};
`;

const TitleBar = styled.header`
  display: flex;
  align-items: center;
  height: 22px;
  padding-left: 2px;
  color: #10161a;
`;

const Title = styled.h2`
  flex: 1;
  width: 0;
  margin: 0;
  font: 11px/22px ${CAPTION};
  white-space: nowrap;
`;

const Close = styled.button`
  display: flex;
  align-items: center;
  justify-content: center;
  width: 16px;
  height: 16px;
  margin-left: 5px;
  border: 1px solid #b6babd;
  background: #4c555c;
`;

const Body = styled.div`
  height: 184px;
  padding: 3px 0 0 3px;
  border: 1px solid #111;
  outline: 1px solid #c8cacb;
  background: #f0f0f0;
`;

const Row = styled.div`
  display: flex;
  align-items: center;
  height: ${p => p.$h}px;
  margin-top: ${p => p.$mt || 0}px;
  padding-left: ${p => p.$pad || 0}px;
`;

const face = css`
  border: 1px solid #707070;
  border-radius: 3px;
  background: linear-gradient(#f2f2f2 50%, #d4d4d6 50%);
`;

const Preset = styled.select`
  appearance: none;
  ${face}
  width: 97px;
  height: 20px;
  padding-left: 4px;
  background: url("data:image/svg+xml,${arrow('#000')}") right 4px center no-repeat, linear-gradient(#f2f2f2 50%, #d4d4d6 50%);
`;

const FaceButton = styled.button`
  ${face}
  flex: none;
  width: ${p => p.$w}px;
  height: 18px;
  margin-left: 5px;
  line-height: 14px;
  white-space: nowrap;
`;

const Dial = styled.svg`
  margin-left: 6px;
`;

const Check = styled.input`
  appearance: none;
  width: 13px;
  height: 13px;
  margin: ${p => p.$m || 0};
  border: 1px solid #8b8e90;
  background: #dfe5ee url("data:image/svg+xml,${check}") -1px -1px no-repeat;
`;

const Radio = styled.input`
  appearance: none;
  width: 12px;
  height: 12px;
  margin-right: 4px;
  border: 1px solid #8b8e90;
  border-radius: 50%;
  background: radial-gradient(#d0d4d8, #fafafa);
  &:checked {
    background: radial-gradient(circle at 4px 4px, #7fd0f0 0 1px, #0c5078 3px, #123050 4px, #e8ecf0 5px);
  }
`;

const edge = css`
  border: 1px solid transparent;
  border-top-color: #a8abae;
  border-right-color: #cfdfe8;
  &:disabled {
    border-color: #afb1b3;
    color: #7e7e7e;
    opacity: 1;
  }
`;

const Field = styled.input`
  ${edge}
  width: ${p => p.$w}px;
  height: 20px;
  margin-left: 3px;
  padding-left: 2px;
`;

const Host = styled.select`
  appearance: none;
  ${edge}
  flex: none;
  width: 171px;
  height: 21px;
  padding-left: 2px;
  background: url("data:image/svg+xml,${p => arrow(p.disabled ? '#9a9a9a' : '#000')}") right 4px center no-repeat;
`;

const RadioLabel = styled.label`
  display: flex;
  align-items: center;
  width: ${p => p.$w || 200}px;
  white-space: nowrap;
`;

const ChannelLabel = styled.label`
  color: ${p => p.$off ? '#a0a0a0' : '#000'};
`;

const Credit = styled.footer`
  padding-right: 3px;
  text-align: center;
  line-height: 25px;
`;

const LevelMeter = ({ lit }) => (
  <svg width="299" height="24" fontFamily="Liberation Sans" fontSize="10" textAnchor="middle">
    {lit ? (
      <>
        <path d="M0 0h299v24H0z" fill="#00cdb8" />
        <path d="M0 0h14v24H0z" fill="#00b4b4" />
        <path d="M187 0h27v24h-27z" fill="#00e8a5" />
        <path d="M214 0h45v24h-45z" fill="#00ff99" />
        <path d="M252 0h21v24h-16V12h-5z" fill="#005a3c" />
        <path d="M257 12h16" stroke="#083" />
        <path d="M273 0h26v24h-26z" fill="#ff0000" />
      </>
    ) : (
      <>
        <path d="M0 0h175v24H0z" fill="#00504a" />
        <path d="M175 0h98v24h-98z" fill="#005a38" />
        <path d="M273 0h26v24h-26z" fill="#600000" />
        <path d="M0 12.500h299" stroke="#33302e" />
      </>
    )}
    {[60, 48, 36, 24, 12].map((n, i) => {
      const c = lit ? '#e0fff8' : ['#6f8680', '#8fa29c', '#a9b8b4', '#d0dcd8', '#fff'][i];
      return (
        <g key={n} fill={c}>
          <path d={`M${10 + i * 53}.5 0v4M${10 + i * 53}.5 20v4`} stroke={lit ? '#053f3a' : c} />
          <text x={9 + i * 53} y="15" stroke={lit ? '#1a5a50' : 'none'} strokeWidth="2" paintOrder="stroke">-{n}</text>
        </g>
      );
    })}
    <text x="286" y="14" fill="#ffd8d0">{lit ? '+5.0' : '-inf'}</text>
  </svg>
);

const ReaStream = ({ id, x, y, title, sending, host, lit }) => (
  <Plugin $x={x} $y={y}>
    <TitleBar>
      <Title>{title}</Title>
      <svg width="13" height="15"><path d="M3 1h7M4 1v6M9 1v6M6 2v5M1 8h11M6.500 8v7" fill="none" stroke="#fff" strokeWidth="1.600" /></svg>
      <Close aria-label="Close"><svg width="7" height="7"><path d="M1 1l5 5M6 1L1 6" stroke="#fff" strokeWidth="1.600" /></svg></Close>
    </TitleBar>
    <Body>
      <Row $h={20}>
        <Preset aria-label="Preset"><option>No preset</option></Preset>
        <FaceButton $w={16}>+</FaceButton>
        <FaceButton $w={43}>Param</FaceButton>
        <FaceButton $w={73}>2/8 in 2/8 out</FaceButton>
        <FaceButton $w={24}>UI</FaceButton>
        <Dial width="16" height="18">
          <circle cx="8" cy="9" r="7.500" fill="#eee" stroke="#6a6a6a" /><path d="M8 9l2 5" stroke="#000" strokeWidth="1.400" />
        </Dial>
        <Check type="checkbox" defaultChecked $m="0 0 0 4px" aria-label="Plug-in enabled" />
      </Row>
      <Row $h={20} $mt={16} $pad={9}>
        <label htmlFor={`${id}-name`}>Identifier:</label>
        <Field id={`${id}-name`} $w={114} defaultValue="default" />
        <Check id={`${id}-on`} type="checkbox" defaultChecked $m="0 3px 0 5px" />
        <label htmlFor={`${id}-on`}>Enabled</label>
      </Row>
      <Row $h={20} $mt={7} $pad={9}>
        <RadioLabel><Radio type="radio" name={id} defaultChecked={!sending} />Receive audio/MIDI</RadioLabel>
      </Row>
      <Row $h={21} $pad={9}>
        <RadioLabel $w={127}><Radio type="radio" name={id} defaultChecked={sending} />Send audio/MIDI; IP:</RadioLabel>
        <Host aria-label="IP" disabled={!sending}><option>{host}</option></Host>
      </Row>
      <Row $h={22} $mt={1} $pad={162}>
        <ChannelLabel htmlFor={`${id}-ch`} $off={!sending}>Audio channels (0-8):</ChannelLabel>
        <Field id={`${id}-ch`} $w={38} defaultValue="2" disabled={!sending} />
      </Row>
      <Row $h={24} $mt={4} $pad={9}><LevelMeter lit={lit} /></Row>
      <Credit>ReaStream by Cockos Incorporated - www.reaper.fm</Credit>
    </Body>
  </Plugin>
);

/* ---------- left session ---------- */

const Work = styled.div`
  display: flex;
  flex: none;
  height: 267px;
`;

const TrackColumn = styled.div`
  display: flex;
  flex-direction: column;
  flex: none;
  width: ${p => p.$w}px;
  padding-top: ${p => p.$pt}px;
`;

const Gap = styled.div`
  flex: none;
  height: ${p => p.$h}px;
`;

const PanelSplit = styled.div`
  flex: none;
  height: 1px;
  margin: ${p => p.$mt}px ${p => p.$mr || 0}px 0 0;
  background: #5a4ca8;
`;

const SendingSession = () => (
  <Daw>
    <Transport height={84} shift={-9} time="3.3.63" bpm="122" playing />
    <MainToolbar $h={31}>
      <ToolRow $indent={121}>
        {FIRST.concat(SECOND).map(n => <ToolButton key={n} name={n} />)}
        <Toggle />
      </ToolRow>
    </MainToolbar>
    <Work>
      <TrackColumn $w={372} $pt={18}>
        <Shelf $shift={-5}>
          <PluginButton $w={29} aria-label="Clock">
            <svg width="29" height="28">
              <circle cx="12" cy="15" r="9.500" fill="none" stroke="#c4c6c8" strokeWidth="1.500" />
              <circle cx="12" cy="15" r="7" fill="none" stroke="#8a8c8e" strokeDasharray="1 2.600" />
              <path d="M12 8v7l4 3" fill="none" stroke="#c4c6c8" strokeWidth="1.500" />
              <circle cx="20" cy="9" r="5.500" fill="#5c6e74" />
              <text x="17" y="12.500" fontSize="10" fontFamily="Liberation Mono" fontWeight="bold" fill="#eee">i</text>
            </svg>
          </PluginButton>
          {['Aligment', 'Adjustmen', 'VNGoLate', 'MUtility'].map(n => <PluginButton key={n}>{n}</PluginButton>)}
          <PluginButton $w={30} aria-label="Spectrum">
            <svg width="28" height="28">
              <path d="M3 5h3v10H3z" fill="#3a20c8" /><path d="M6 5h3v10H6z" fill="#a020d0" /><path d="M9 5h3v8H9z" fill="#e02080" />
              <path d="M12 5h2v6h-2z" fill="#e05020" /><path d="M14 5h2v5h-2z" fill="#50b820" />
              <text x="9" y="22" fontSize="19" fontFamily="Liberation Serif" fontStyle="italic" fontWeight="bold" fill="#eee">ff</text>
            </svg>
          </PluginButton>
        </Shelf>
        <Shelf $shift={-4}>
          {['Alterboy', 'MHarmoni', 'ReaPitch', 'Melodyne', 'WavesRT'].map(n => <PluginButton key={n}>{n}</PluginButton>)}
        </Shelf>
        <Gap $h={15} />
        <TrackPanel height={61} pad={3} controls={333} name="VEDM Melodyloop 00" input="HDSP9632 SPDIF..1">
          <svg width="14" height="61">
            <path d="M2 2h10v4H2z" fill="#ff0000" /><path d="M2 8.500h10" stroke="#e04000" strokeDasharray="4 1" />
            <path d="M2 13h4v46H2zM8 13h4v46H8z" fill="#34f2ae" />
            <path d="M2 13h4v6H2zM8 13h4v6H8z" fill="#00e890" />
            <path d="M2 51h4v8H2zM8 51h4v8H8z" fill="#2aa888" />
          </svg>
        </TrackPanel>
        <PanelSplit $mt={89} />
      </TrackColumn>
      <Timeline>
        <Overview $mt={23} />
        <Ruler $mt={16} $h={32} $step={9} $tick={3}>
          {['1.1.00', '3.1.00', '5.1.00', '7.1.00'].map(m => <Mark key={m} $w={71}>{m}</Mark>)}
        </Ruler>
        <Beats />
        <Arrange $h={149}>
          <Lane>
            <Item>
              <ItemHead>
                <ItemChip><svg width="13" height="11"><path d="M4 5h6v4H4zM5 5V3h4v2" fill="#1f2022" stroke="#1f2022" /></svg></ItemChip>
                <ItemChip>M</ItemChip>
                <ItemChip><svg width="13" height="11"><path d="M2 2h9v6H6l-2 2V8H2z" fill="#1f2022" /></svg></ItemChip>
                <ItemChip>i</ItemChip>
                <ItemChip>FX</ItemChip>
                <ItemChip><svg width="13" height="11"><path d="M2 8l4-4 2 2 3-3" fill="none" stroke="#1f2022" strokeWidth="2" /></svg></ItemChip>
                <ItemName>[Rate:0.953] VEDM Melodyloop 0</ItemName>
              </ItemHead>
              <Waveform />
            </Item>
            <GridLines />
            <PlayCursor />
          </Lane>
          <ScrollColumn>
            <ScrollArrow d="M5.500 3l3 4h-6z" />
            <ScrollThumb />
            <ScrollArrow d="M5.500 8l3-4h-6z" />
            <ZoomSigns $down><Sign plus /><Sign /></ZoomSigns>
          </ScrollColumn>
        </Arrange>
        <ScrollRow $gap={5}><ZoomSigns><Sign plus /><Sign /></ZoomSigns><Corner /></ScrollRow>
        <EditCursor $top={57}><CursorFlag /></EditCursor>
      </Timeline>
    </Work>
    <Mixer $w={200} $h={406}>
      <Strip $w={125} $shift={-8}>
        <Slots $h={57} />
        <SlotRule $w={77} />
        <MasterHead send="HDSP9632 Analog 1 / H" space={71} />
        <Pan $h={37} $pt={8}><PanKnob /></Pan>
        <FaderRow $h={170}>
          <FaderBox $w={95}>
            <MasterLit />
            <Fader type="range" aria-label="Master volume" defaultValue="74" $h={136} $mt={24} />
          </FaderBox>
          <Side $w={29}>
            <SideButton>M</SideButton>
            <SideButton>S</SideButton>
            <EnvIcon />trim
          </Side>
          <CornerButton $left={91} $top={146} aria-label="Master settings"><Gear /></CornerButton>
        </FaderRow>
        <StripFoot />
      </Strip>
      <Strip $w={83}>
        <Slots $h={57}>ReaStream<br />ReaStream</Slots>
        <SlotRule $w={35} />
        <Sends $h={71} />
        <StripHead $pad={5}>
          <FxBlock $on><Power color="#11b5a0" />FX</FxBlock>
          <RoutingButton ml={6} />
        </StripHead>
        <StripName $pad={4}>VEDM Melody</StripName>
        <Pan $h={37} $pt={8}><PanKnob /></Pan>
        <FaderRow $h={170}>
          <FaderBox $w={54}>
            <TrackLit />
            <Fader type="range" aria-label="Track 1 volume" defaultValue="74" $h={136} $mt={24} />
          </FaderBox>
          <Side>
            <SideButton>M</SideButton>
            <SideButton>S</SideButton>
            <EnvIcon />trim
            <InBadge $mt={28}>IN<ArrowRing size={14} /></InBadge>
          </Side>
          <CornerButton $left={50} $top={147} aria-label="Arm track 1"><RecordDot size={23} /></CornerButton>
        </FaderRow>
        <StripFoot $c="#e09a40">1</StripFoot>
      </Strip>
    </Mixer>
  </Daw>
);

/* ---------- right session ---------- */

const Columns = styled.div`
  display: flex;
  flex: ${p => p.$fill ? 1 : 'none'};
  min-height: 0;
`;

const Stage = styled.div`
  flex: 1;
  min-width: 0;
`;

const Inset = styled.div`
  margin-right: 5px;
`;

const MasterColumn = styled.div`
  flex: none;
  width: 125px;
  margin-right: 56px;
  background: linear-gradient(${PANEL} 384px, #6b6e71 384px);
  overflow: hidden;
`;

const DockTab = styled.div`
  align-self: flex-end;
  width: 10px;
  height: 76px;
  background: #232426;
  color: #12a8c0;
  font: bold 9px/10px ${SEGOE};
  writing-mode: vertical-rl;
  transform: rotate(180deg);
  white-space: nowrap;
`;

const ReceivingSession = () => (
  <Daw>
    <Transport height={64} time="1.1.00" bpm="140" selection={['1.1.00', '1.1.00', '0.0.00']} />
    <MainToolbar $h={34}>
      <ToolRow $indent={171}>
        {FIRST.concat(SECOND).map(n => <ToolButton key={n} name={n} />)}
        <Toggle />
      </ToolRow>
    </MainToolbar>
    <Columns $fill>
      <Stage>
        <Columns>
          <TrackColumn $w={381} $pt={15}>
            <ToolRow $indent={4}>{FIRST.map(n => <ToolButton key={n} name={n} />)}</ToolRow>
            <ToolRow $indent={4}>{SECOND.map(n => <ToolButton key={n} name={n} />)}<Toggle /></ToolRow>
            <Gap $h={15} />
            <TrackPanel height={51} inset={2} pad={10} controls={340} name="" input="Input 4+1ch" armed>
              <svg width="14" height="51"><path d="M2 27h10v23H2z" fill="#161718" /><path d="M2 38h4v12H2zM8 38h4v12H8z" fill="#331416" /></svg>
            </TrackPanel>
            <PanelSplit $mr={8} $mt={0} />
          </TrackColumn>
          <Timeline>
            <Inset>
              <Overview $mt={20} />
              <Ruler $mt={14} $h={38} $step={43} $tick={6}>
                <Mark $w={86}>1.1.00</Mark>
                <Mark $w={60} $fs={11} $mt={7} $c="#55585a">1.3.00</Mark>
              </Ruler>
              <Arrange $h={51}>
                <Lane />
                <ScrollColumn $spread>
                  <ScrollArrow d="M5.500 3l3 4h-6z" />
                  <ScrollArrow d="M5.500 8l3-4h-6z" />
                </ScrollColumn>
              </Arrange>
              <ScrollRow $gap={6}>
                <ScrollArrow d="M3 5.500l4-3v6z" />
                <svg width="52" height="11">
                  <rect width="52" height="11" rx="5" fill="#4a4b4d" />
                  <circle cx="5" cy="5.500" r="3" fill="#161718" /><circle cx="47" cy="5.500" r="3" fill="#161718" /><path d="M26 2v7" stroke="#161718" strokeWidth="2" />
                </svg>
                <ScrollArrow d="M8 5.500l-4-3v6z" />
                <ZoomSigns><Sign plus /><Sign /></ZoomSigns>
                <Corner />
              </ScrollRow>
            </Inset>
            <EditCursor $top={54}><CursorFlag /></EditCursor>
          </Timeline>
        </Columns>
        <Gap $h={7} />
        <Mixer $w={84} $h={525}>
          <Strip $w={84}>
            <Slots $h={98}>ReaStream<br />4-Band EQ<br />ReaStream</Slots>
            <SlotRule $w={35} />
            <Sends $h={112} />
            <StripHead $pad={2}>
              <FxBlock $on $w={23}><Power color="#11b5a0" />FX</FxBlock>
              <InFx>IN<br />FX</InFx>
              <RoutingButton ml={0} />
            </StripHead>
            <Pan $h={72} $pt={29} $c="#151617"><PanKnob />centre</Pan>
            <FaderRow $h={198}>
              <FaderBox $w={55}>
                <TrackIdle />
                <Fader type="range" aria-label="Track 1 volume" defaultValue="74" $h={162} $mt={24} />
              </FaderBox>
              <Side>
                <SideButton>M</SideButton>
                <SideButton>S</SideButton>
                <EnvIcon />trim
                <InBadge $mt={56}>IN<ArrowRing size={14} /></InBadge>
              </Side>
              <CornerButton $left={50} $top={174} aria-label="Arm track 1"><RecordDot armed size={23} /></CornerButton>
            </FaderRow>
            <StripFoot>1</StripFoot>
          </Strip>
        </Mixer>
      </Stage>
      <MasterColumn>
        <Strip $w={125}>
          <Slots $h={158} />
          <MasterHead send="ReWire Output 1 / ReW" space={173} />
          <Pan $h={70} $pt={27} $c="#101112"><PanKnob ring />centre</Pan>
          <FaderRow $h={250} $pad={6}>
            <FaderBox $w={90}>
              <MasterIdle />
              <Fader type="range" aria-label="Master volume" defaultValue="74" $h={203} $mt={24} />
            </FaderBox>
            <Side $w={30}>
              <SideButton $boxed>M</SideButton>
              <SideButton $boxed>S</SideButton>
              <EnvIcon />
            </Side>
            <CornerButton $left={91} $top={213} aria-label="Master settings"><Gear /></CornerButton>
          </FaderRow>
        </Strip>
      </MasterColumn>
      <DockTab>Mixer Master</DockTab>
    </Columns>
  </Daw>
);

const ResizePointer = styled.svg`
  position: absolute;
  left: 1176px;
  top: 693px;
`;

const App = () => (
  <>
    <GlobalStyle />
    <Desktop>
      <SendingSession />
      <Frames />
      <ReceivingSession />
      <ReaStream id="s1" x={244} y={330} title={'VST: ReaStream (Cockos) (8ch) - Track 1 "VEDM Melody...'} sending host="* broadcast" lit />
      <ReaStream id="s2" x={248} y={560} title={'VST: ReaStream (Cockos) (8ch) - Track 1 "VEDM Melody...'} host="" lit />
      <ReaStream id="r1" x={790} y={286} title="VST: ReaStream (Cockos) (8ch) - Track 1 [1/3]" host="" />
      <ReaStream id="r3" x={785} y={538} title="VST: ReaStream (Cockos) (8ch) - Track 1 [3/3]" sending host="" />
      <ResizePointer width="21" height="12">
        <path d="M0 6l5-5v4h11V1l5 5-5 5V7H5v4z" fill="#fff" stroke="#111" strokeWidth=".8" />
      </ResizePointer>
    </Desktop>
  </>
);

export default App;
